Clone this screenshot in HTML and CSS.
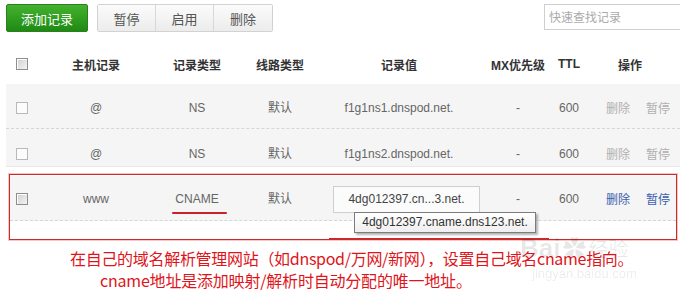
FILE: index.html
```html
<!DOCTYPE html>
<html lang="zh-CN">
<head>
<meta charset="utf-8">
<title>记录管理</title>
<link rel="stylesheet" href="styles.css">
</head>
<body>
<div class="page">
  <div class="toolbar">
    <button class="btn-green">添加记录</button>
    <div class="btn-group">
      <button class="btn">暂停</button>
      <button class="btn">启用</button>
      <button class="btn">删除</button>
    </div>
    <div class="search">快速查找记录</div>
  </div>

  <div class="grid head">
    <div class="c1"><span class="cb cb-dark"></span></div>
    <div>主机记录</div>
    <div>记录类型</div>
    <div>线路类型</div>
    <div>记录值</div>
    <div>MX优先级</div>
    <div>TTL</div>
    <div class="ops-h">操作</div>
  </div>

  <div class="grid row r1">
    <div class="c1"><span class="cb"></span></div>
    <div>@</div>
    <div>NS</div>
    <div>默认</div>
    <div>f1g1ns1.dnspod.net.</div>
    <div>-</div>
    <div>600</div>
    <div class="ops muted"><span>删除</span><span>暂停</span></div>
  </div>

  <div class="grid row r2">
    <div class="c1"><span class="cb"></span></div>
    <div>@</div>
    <div>NS</div>
    <div>默认</div>
    <div>f1g1ns2.dnspod.net.</div>
    <div>-</div>
    <div>600</div>
    <div class="ops muted"><span>删除</span><span>暂停</span></div>
  </div>

  <div class="annot">
    <div class="grid row r3">
      <div class="c1"><span class="cb cb-dark"></span></div>
      <div>www</div>
      <div><span class="underlined">CNAME</span></div>
      <div>默认</div>
      <div class="val-cell">
        <div class="val-box">4dg012397.cn...3.net.
          <div class="tooltip">4dg012397.cname.dns123.net.</div>
          <span class="red-mark"></span>
        </div>
      </div>
      <div>-</div>
      <div>600</div>
      <div class="ops active"><span>删除</span><span>暂停</span></div>
    </div>
  </div>

  <div class="note">
    <p class="l1">在自己的域名解析管理网站（如dnspod/万网/新网），设置自己域名cname指向。</p>
    <p class="l2">cname地址是添加映射/解析时自动分配的唯一地址。</p>
  </div>

  <div class="watermark">
    <div class="wm-logo">Bai<span class="wm-paw">&#10047;</span><span class="wm-cn">经验</span></div>
    <div class="wm-url">jingyan.baidu.com</div>
  </div>
</div>
</body>
</html>
```

FILE: styles.css
```css
html, body {
  margin: 0;
  padding: 0;
  background: #fff;
}
body {
  width: 680px;
  height: 296px;
  overflow: hidden;
  font-family: "Liberation Sans", "Noto Sans CJK SC", sans-serif;
  font-size: 12px;
  color: #666;
}
.page {
  position: relative;
  width: 680px;
  height: 296px;
  overflow: hidden;
}

/* toolbar */
.toolbar {
  display: flex;
  align-items: flex-start;
  padding: 4px 0 0 6px;
}
.btn-green {
  width: 82px;
  height: 28px;
  margin: 0 9px 0 0;
  padding: 0;
  border: 1px solid #2b7f1d;
  border-radius: 2px;
  background: linear-gradient(#44b22e, #1e8a14);
  color: #fff;
  font-family: "Noto Sans CJK SC", sans-serif;
  font-size: 13px;
}
.btn-group {
  display: flex;
  height: 28px;
  border: 1px solid #d2d2d2;
  border-radius: 2px;
  box-sizing: border-box;
}
.btn {
  width: 58px;
  height: 26px;
  margin: 0;
  padding: 0;
  border: 0;
  border-right: 1px solid #d8d8d8;
  background: linear-gradient(#fbfbfb, #ececec);
  color: #555;
  font-family: "Noto Sans CJK SC", sans-serif;
  font-size: 13px;
}
.btn:last-child { border-right: 0; }
.search {
  margin-left: auto;
  margin-right: -14px;
  width: 150px;
  height: 26px;
  box-sizing: border-box;
  border: 1px solid #cfcfcf;
  padding-left: 4px;
  line-height: 24px;
  color: #aaa;
  font-family: "Noto Sans CJK SC", sans-serif;
  font-size: 12px;
}

/* grid table */
.grid {
  display: grid;
  grid-template-columns: 32px 116px 86px 80px 158px 80px 22px 1fr;
  align-items: center;
  margin-left: 6px;
  text-align: center;
  white-space: nowrap;
}
.grid > div {
  display: flex;
  justify-content: center;
  align-items: center;
}
.grid > .c1 {
  justify-content: flex-start;
  padding-left: 10px;
}
.head {
  margin-top: 12px;
  height: 40px;
  color: #333;
  font-weight: bold;
}
.head > .ops-h {
  justify-content: flex-start;
  padding-left: 38px;
}
.row {
  background: #f5f5f5;
  line-height: 20px;
}
.r1 {
  height: 40px;
  padding-top: 4px;
  border-bottom: 1px dashed #d6d6d6;
}
.r2 {
  height: 24px;
  padding-top: 13px;
  border-bottom: 1px solid #e8e8e8;
}
.ops {
  justify-content: flex-start !important;
  padding-left: 26px;
  gap: 16px;
  font-family: "Noto Sans CJK SC", sans-serif;
}
.muted { color: #b0b0b0; }
.active { color: #3a5fae; }

/* checkbox */
.cb {
  display: inline-block;
  width: 10px;
  height: 10px;
  border: 1px solid #b9b9b9;
  background: #fcfcfc;
}
.cb-dark {
  border-color: #8e8e8e;
  background: linear-gradient(135deg, #cfcfcf, #f4f4f4);
  box-shadow: inset 1px 1px 0 #fff;
}

/* annotated row */
.annot {
  position: relative;
  margin: 7px 3px 0 9px;
  padding-top: 1px;
  height: 63px;
  border: 1px solid #cc2a2a;
  box-shadow: 0 0 0 1px rgba(230, 130, 130, 0.45);
}
.r3 {
  margin-left: 0;
  grid-template-columns: 28px 116px 86px 80px 158px 80px 22px 1fr;
  height: 42px;
  padding-top: 2px;
  border-bottom: 1px dashed #d6d6d6;
}
.r3 > .c1 { padding-left: 6px; }
.underlined {
  position: relative;
}
.underlined::after {
  content: "";
  position: absolute;
  left: -3px;
  width: 55px;
  top: 23px;
  height: 2px;
  background: #c8222a;
  border-radius: 1px;
}
.val-cell {
  justify-content: flex-start !important;
  padding-left: 13px;
}
.val-box {
  position: relative;
  flex: none;
  width: 147px;
  height: 27px;
  box-sizing: border-box;
  border: 1px solid #cfcfcf;
  background: #fbfbfb;
  color: #444;
  line-height: 25px;
  text-align: center;
}
.tooltip {
  position: absolute;
  left: 20px;
  top: 25px;
  width: 182px;
  height: 21px;
  box-sizing: border-box;
  border: 1px solid #7c7c7c;
  background: linear-gradient(#ffffff, #efefef);
  box-shadow: 2px 2px 2px rgba(0, 0, 0, 0.3);
  color: #333;
  line-height: 19px;
  font-size: 12px;
  text-align: center;
  z-index: 2;
}
.red-mark {
  position: absolute;
  left: -5px;
  top: 51px;
  width: 220px;
  height: 2px;
  background: #cc2a2a;
}

/* note */
.note {
  margin-top: 7px;
  color: #e0141a;
  font-family: "Noto Sans CJK SC", sans-serif;
  font-size: 16px;
  line-height: 22px;
}
.note p {
  margin: 0;
  white-space: nowrap;
}
.note .l1 { padding-left: 70px; letter-spacing: -0.3px; }
.note .l2 { padding-left: 100px; letter-spacing: -0.2px; }

/* watermark */
.watermark {
  position: absolute;
  left: 520px;
  top: 232px;
  width: 160px;
  color: rgba(0, 0, 0, 0.09);
  font-family: "Liberation Sans", "Noto Sans CJK SC", sans-serif;
}
.wm-logo {
  font-size: 26px;
  line-height: 32px;
  font-weight: bold;
}
.wm-paw { font-size: 24px; margin: 0 2px; }
.wm-cn { font-size: 20px; font-weight: normal; }
.wm-url {
  font-size: 13px;
  line-height: 16px;
  padding-left: 12px;
}
```
